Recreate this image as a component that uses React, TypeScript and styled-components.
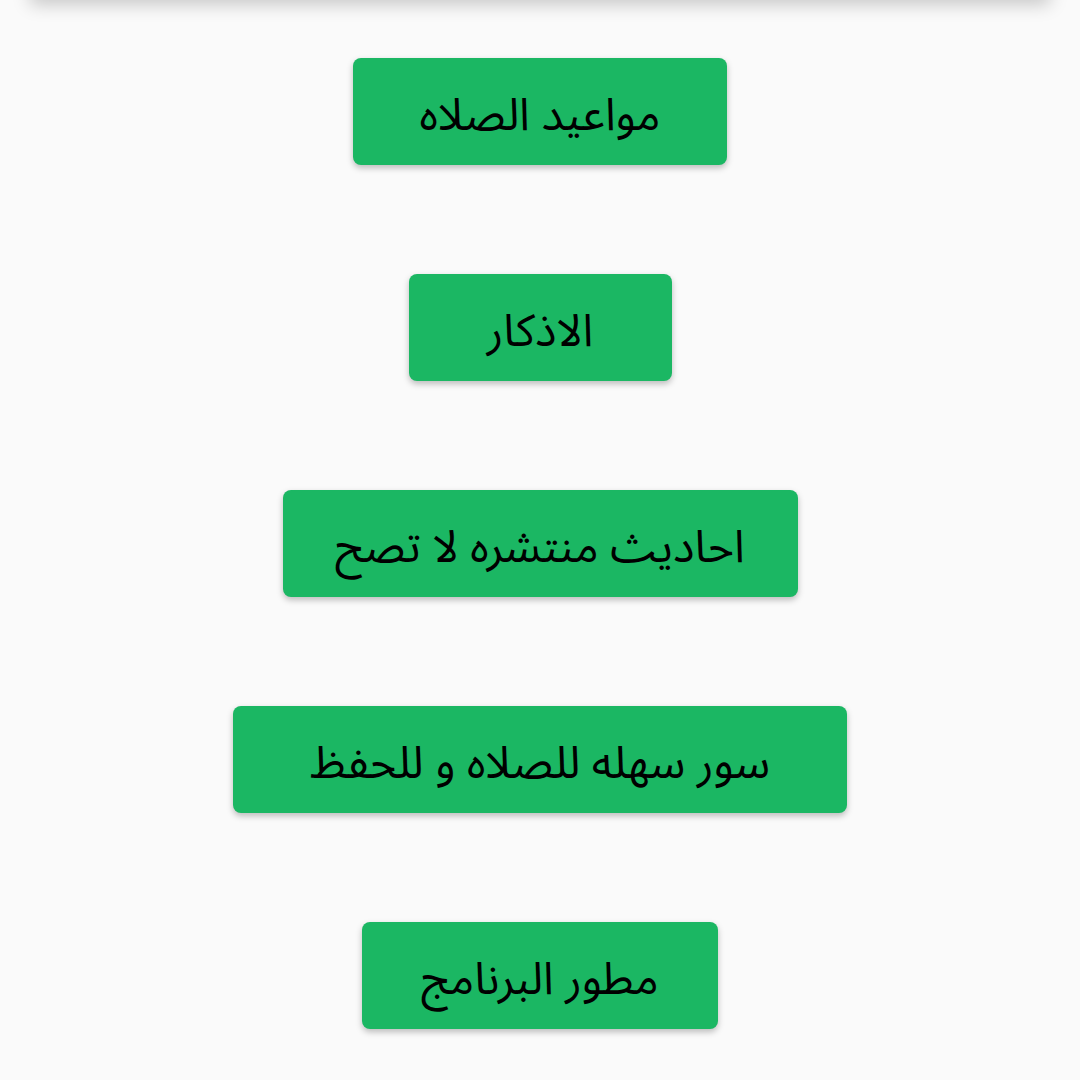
import React from "react";
import styled, { createGlobalStyle } from "styled-components";

const GlobalStyle = createGlobalStyle`
  html, body {
    margin: 0;
    padding: 0;
    background: #fafafa;
  }
  body {
    font-family: "Noto Sans Arabic", "DejaVu Sans", "Noto Sans", sans-serif;
  }
`;

const Page = styled.div`
  width: 1080px;
  height: 1080px;
  overflow: hidden;
  background: #fafafa;
  display: flex;
  flex-direction: column;
  align-items: center;
`;

const TopBar = styled.div`
  align-self: stretch;
  height: 20px;
  margin: -20px 30px 0;
  background: #fafafa;
  box-shadow: 0 4px 18px rgba(0, 0, 0, 0.22);
`;

const Menu = styled.div`
  display: flex;
  flex-direction: column;
  align-items: center;
  gap: 109px;
  padding-top: 58px;
`;

const MenuButton = styled.button<{ $width: number }>`
  width: ${(p) => p.$width}px;
  height: 107px;
  padding: 8px 0 0;
  border: none;
  border-radius: 8px;
  background: #1bb763;
  color: #000;
  font-family: "Noto Sans Arabic", "DejaVu Sans", "Noto Sans", sans-serif;
  font-size: 45px;
  font-weight: 400;
  direction: rtl;
  display: flex;
  align-items: center;
  justify-content: center;
  box-shadow: 0 3px 6px rgba(0, 0, 0, 0.25);
  cursor: pointer;
  white-space: nowrap;
`;

const items = [
  { label: "مواعيد الصلاه", width: 374 },
  { label: "الاذكار", width: 263 },
  { label: "احاديث منتشره لا تصح", width: 515 },
  { label: "سور سهله للصلاه و للحفظ", width: 614 },
  { label: "مطور البرنامج", width: 356 },
];

export default function App() {
  return (
    <>
      <GlobalStyle />
      <Page>
        <TopBar />
        <Menu>
          {items.map((item) => (
            <MenuButton key={item.label} $width={item.width}>
              {item.label}
            </MenuButton>
          ))}
        </Menu>
      </Page>
    </>
  );
}
